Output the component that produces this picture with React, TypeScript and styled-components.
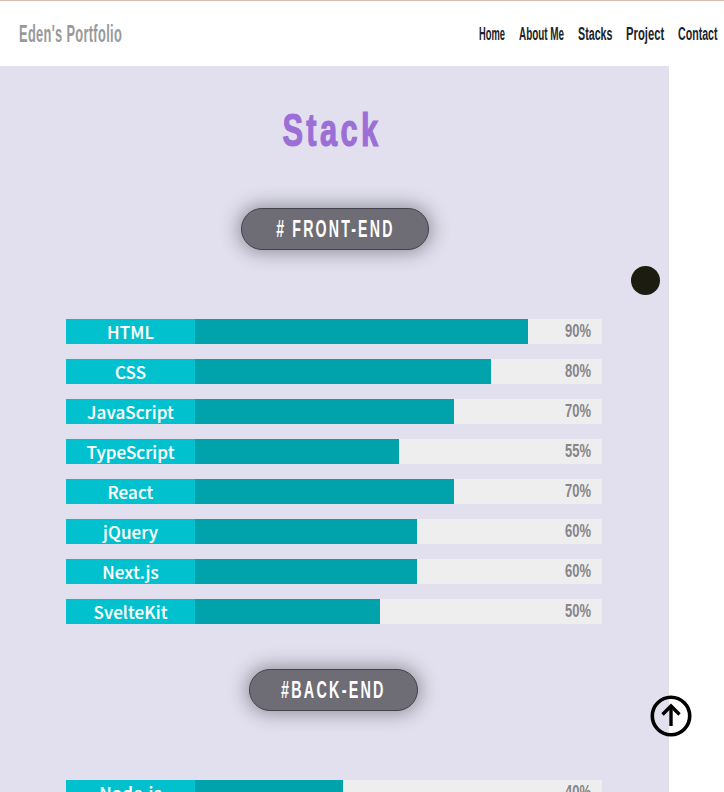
import React from 'react';
import styled, { createGlobalStyle } from 'styled-components';

const Global = createGlobalStyle`
  html, body { margin: 0; padding: 0; background: #fff; overflow: hidden; }
  #root { height: 792px; overflow: hidden; }
`;

const display = `"Liberation Sans", Arial, sans-serif`;

const Page = styled.div`
  position: relative;
  width: 724px;
  height: 792px;
  overflow: hidden;
  background: #fff;
`;

const Header = styled.header`
  height: 65px;
  border-top: 1px solid #d9bdb5;
  display: flex;
  align-items: center;
  justify-content: space-between;
  padding: 0 7px 0 19px;
  font-family: ${display};
  font-weight: 700;
`;

const Logo = styled.a`
  display: block;
  width: 103px;
  white-space: nowrap;
  font-size: 24px;
  line-height: 26px;
  letter-spacing: 0.6px;
  color: #98999b;
`;

const Nav = styled.nav`
  display: flex;
  gap: 14px;
`;

const NavLink = styled.a<{ $w: number }>`
  display: block;
  width: ${p => p.$w}px;
  white-space: nowrap;
  font-size: 18px;
  line-height: 20px;
  color: #20222a;
`;

const Squeeze = styled.span<{ $x: number; $origin?: string }>`
  display: inline-block;
  transform: scaleX(${p => p.$x});
  transform-origin: ${p => p.$origin ?? 'left'} center;
`;

const Main = styled.main`
  width: 669px;
  background: #e2e0ee;
  padding-top: 33px;
  height: 800px;
  display: flex;
  flex-direction: column;
  align-items: center;
`;

const Title = styled.h1`
  margin: 0 6px -1px 0;
  font-family: ${display};
  font-size: 46px;
  line-height: 62px;
  font-weight: 700;
  letter-spacing: 5px;
  -webkit-text-stroke: 1.2px #9b6fd6;
  color: #9b6fd6;
`;

const Badge = styled.h2<{ $top: number; $width: number; $nudge: number }>`
  box-sizing: border-box;
  margin: ${p => p.$top}px ${p => (p.$nudge < 0 ? -p.$nudge : 0)}px 69px ${p => (p.$nudge > 0 ? p.$nudge : 0)}px;
  width: ${p => p.$width}px;
  height: 42px;
  display: flex;
  align-items: center;
  justify-content: center;
  white-space: nowrap;
  border-radius: 21px;
  border: 1px solid #43424e;
  background: #6e6c74;
  box-shadow: 0 0 18px 3px rgba(40, 38, 50, 0.42);
  color: #fff;
  font-family: ${display};
  font-size: 24px;
  font-weight: 700;
  letter-spacing: 3.7px;
`;

const BarList = styled.ul`
  list-style: none;
  margin: 0 1px 0 0;
  padding: 0;
  width: 536px;
  display: flex;
  flex-direction: column;
  gap: 15px;
`;

const Bar = styled.li`
  height: 25px;
  display: flex;
  position: relative;
  background: #eeeeee;
`;

const BarLabel = styled.span`
  width: 129px;
  flex: none;
  background: #00c1cd;
  color: #fff;
  text-align: center;
  font-family: "Noto Sans CJK KR", "Noto Sans", sans-serif;
  font-size: 17px;
  font-weight: 500;
  -webkit-text-stroke: 0.15px #fff;
  letter-spacing: 0.1px;
  line-height: 26px;
`;

const BarFill = styled.span`
  display: block;
  height: 100%;
  background: #00a3ab;
`;

const Percent = styled.span`
  position: absolute;
  right: 11px;
  top: 0;
  line-height: 24px;
  font-family: ${display};
  font-size: 18px;
  font-weight: 700;
  color: #85858a;
`;

const Dot = styled.div`
  position: absolute;
  left: 631px;
  top: 266px;
  width: 29px;
  height: 29px;
  border-radius: 50%;
  background: #1d1c10;
`;

const TopButton = styled.a`
  position: absolute;
  left: 649px;
  top: 694px;
  width: 44px;
  height: 44px;
  color: #000;
`;

type Skill = { name: string; pct: number };

const front: Skill[] = [
  { name: 'HTML', pct: 90 },
  { name: 'CSS', pct: 80 },
  { name: 'JavaScript', pct: 70 },
  { name: 'TypeScript', pct: 55 },
  { name: 'React', pct: 70 },
  { name: 'jQuery', pct: 60 },
  { name: 'Next.js', pct: 60 },
  { name: 'SvelteKit', pct: 50 },
];

const back: Skill[] = [{ name: 'Node.js', pct: 40 }];

const links = [
  { label: 'Home', w: 26, x: 0.52 },
  { label: 'About Me', w: 45, x: 0.55 },
  { label: 'Stacks', w: 34, x: 0.595 },
  { label: 'Project', w: 38, x: 0.625 },
  { label: 'Contact', w: 39, x: 0.59 },
];

const Bars = ({ items }: { items: Skill[] }) => (
  <BarList>
    {items.map(s => (
      <Bar key={s.name}>
        <BarLabel>{s.name}</BarLabel>
        <BarFill style={{ width: s.pct * 3.7 }} />
        <Percent>
          <Squeeze $x={0.72} $origin="right">{s.pct}%</Squeeze>
        </Percent>
      </Bar>
    ))}
  </BarList>
);

export default function App() {
  return (
    <Page>
      <Global />
      <Header>
        <Logo>
          <Squeeze $x={0.535}>Eden's Portfolio</Squeeze>
        </Logo>
        <Nav>
          {links.map(n => (
            <NavLink key={n.label} $w={n.w}>
              <Squeeze $x={n.x}>{n.label}</Squeeze>
            </NavLink>
          ))}
        </Nav>
      </Header>
      <Main>
        <Title>
          <Squeeze $x={0.67} $origin="center">Stack</Squeeze>
        </Title>
        <Badge $top={48} $width={188} $nudge={1}>
          <Squeeze $x={0.59} $origin="center"># FRONT-END</Squeeze>
        </Badge>
        <Bars items={front} />
        <Badge $top={45} $width={169} $nudge={-2}>
          <Squeeze $x={0.6} $origin="center">#BACK-END</Squeeze>
        </Badge>
        <Bars items={back} />
      </Main>
      <Dot />
      <TopButton>
        <svg width="44" height="44" viewBox="0 0 44 44" fill="none" stroke="currentColor" strokeWidth="3.6">
          <circle cx="22" cy="22" r="18.7" />
          <path d="M22 32V11.5" strokeWidth="3.4" />
          <path d="M13.5 20.5L22 12l8.5 8.5" strokeWidth="3.4" />
        </svg>
      </TopButton>
    </Page>
  );
}
